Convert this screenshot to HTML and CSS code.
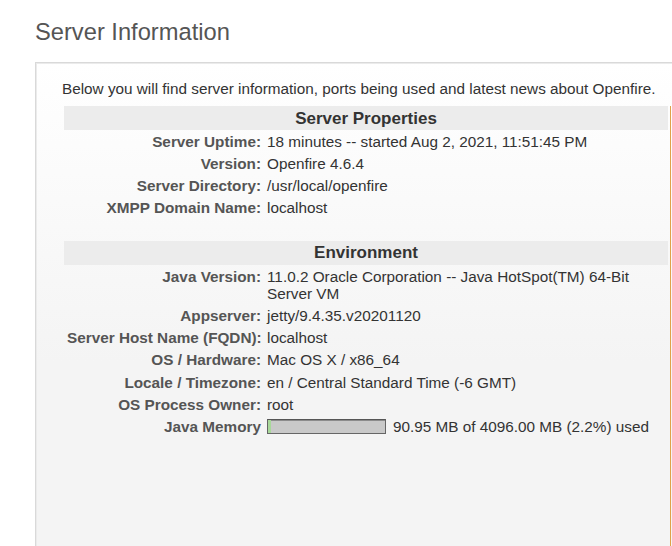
FILE: index.html
```html
<!DOCTYPE html>
<html lang="en">
<head>
<meta charset="utf-8">
<title>Server Information</title>
<link rel="stylesheet" href="styles.css">
</head>
<body>
<h1 class="page-title">Server Information</h1>
<div class="content-box">
  <div class="main-col">
    <p class="intro">Below you will find server information, ports being used and latest news about Openfire.</p>
    <table class="info-table">
      <colgroup><col class="col-label"><col class="col-value"></colgroup>
      <thead>
        <tr><th colspan="2" class="section-head">Server Properties</th></tr>
      </thead>
      <tbody>
        <tr><td class="label">Server Uptime:</td><td class="value">18 minutes -- started Aug 2, 2021, 11:51:45 PM</td></tr>
        <tr><td class="label">Version:</td><td class="value">Openfire 4.6.4</td></tr>
        <tr><td class="label">Server Directory:</td><td class="value">/usr/local/openfire</td></tr>
        <tr><td class="label">XMPP Domain Name:</td><td class="value">localhost</td></tr>
        <tr class="spacer"><td colspan="2"></td></tr>
        <tr><th colspan="2" class="section-head">Environment</th></tr>
        <tr><td class="label">Java Version:</td><td class="value">11.0.2 Oracle Corporation -- Java HotSpot(TM) 64-Bit Server VM</td></tr>
        <tr><td class="label">Appserver:</td><td class="value">jetty/9.4.35.v20201120</td></tr>
        <tr><td class="label">Server Host Name (FQDN):</td><td class="value">localhost</td></tr>
        <tr><td class="label">OS / Hardware:</td><td class="value">Mac OS X / x86_64</td></tr>
        <tr><td class="label">Locale / Timezone:</td><td class="value">en / Central Standard Time (-6 GMT)</td></tr>
        <tr><td class="label">OS Process Owner:</td><td class="value">root</td></tr>
        <tr><td class="label">Java Memory</td><td class="value"><span class="mem-bar"><span class="mem-used" style="width:2.2%"></span></span><span class="mem-text">90.95 MB of 4096.00 MB (2.2%) used</span></td></tr>
      </tbody>
    </table>
  </div>
  <div class="side-col"></div>
</div>
</body>
</html>
```
FILE: styles.css
```css
html, body {
  margin: 0;
  padding: 0;
  overflow: hidden;
  background: #fff;
}
body {
  font-family: "Liberation Sans", Arial, Helvetica, sans-serif;
  font-size: 15.3px;
  color: #333;
  padding-left: 35px;
  height: 100vh;
  box-sizing: border-box;
  display: flex;
  flex-direction: column;
}
.page-title {
  flex: none;
  margin: 18px 0 16px 0;
  font-size: 23.7px;
  font-weight: normal;
  line-height: 28px;
  color: #555;
}
.content-box {
  flex: 1;
  display: flex;
  align-items: stretch;
  min-height: 0;
  border-top: 1px solid #d9d9d9;
  border-left: 1px solid #d9d9d9;
  box-shadow: inset 1px 1px 0 #ebebeb;
  background-color: #f4f4f4;
  background-image: linear-gradient(to bottom, #ffffff 0, #f4f4f4 300px);
  background-repeat: no-repeat;
  background-size: 100% 300px;
  padding: 17px 0 0 26px;
}
.main-col {
  width: 608px;
  flex: none;
}
.intro {
  margin: 0 0 9px 0;
  line-height: 17px;
  white-space: nowrap;
}
.info-table {
  margin-left: 2px;
  width: 604px;
  table-layout: fixed;
  border-collapse: collapse;
}
.col-label { width: 200px; }
.col-value { width: 404px; }
.section-head {
  background: #ececec;
  font-size: 17px;
  font-weight: bold;
  color: #333;
  line-height: 17px;
  padding: 3.5px 3px;
  text-align: center;
}
.label, .value {
  line-height: 17px;
  padding: 2.65px 3px;
  vertical-align: top;
}
.label {
  text-align: right;
  font-weight: bold;
  color: #555;
  white-space: nowrap;
}
.value {
  color: #333;
}
.spacer td {
  height: 21.8px;
  padding: 0;
}
.mem-bar {
  display: inline-block;
  box-sizing: border-box;
  width: 119px;
  height: 15px;
  border: 1px solid #666;
  border-top-color: #555;
  background: #c9c9c9;
  box-shadow: inset 0 1px 0 #8c8c8c;
  vertical-align: -2px;
  margin-right: 7px;
}
.mem-used {
  display: block;
  height: 100%;
  background: #a8d89a;
}
.mem-text {
  white-space: nowrap;
}
.side-col {
  flex: 1;
  margin-top: 26px;
  border-left: 1px solid #e0a24a;
}
```
